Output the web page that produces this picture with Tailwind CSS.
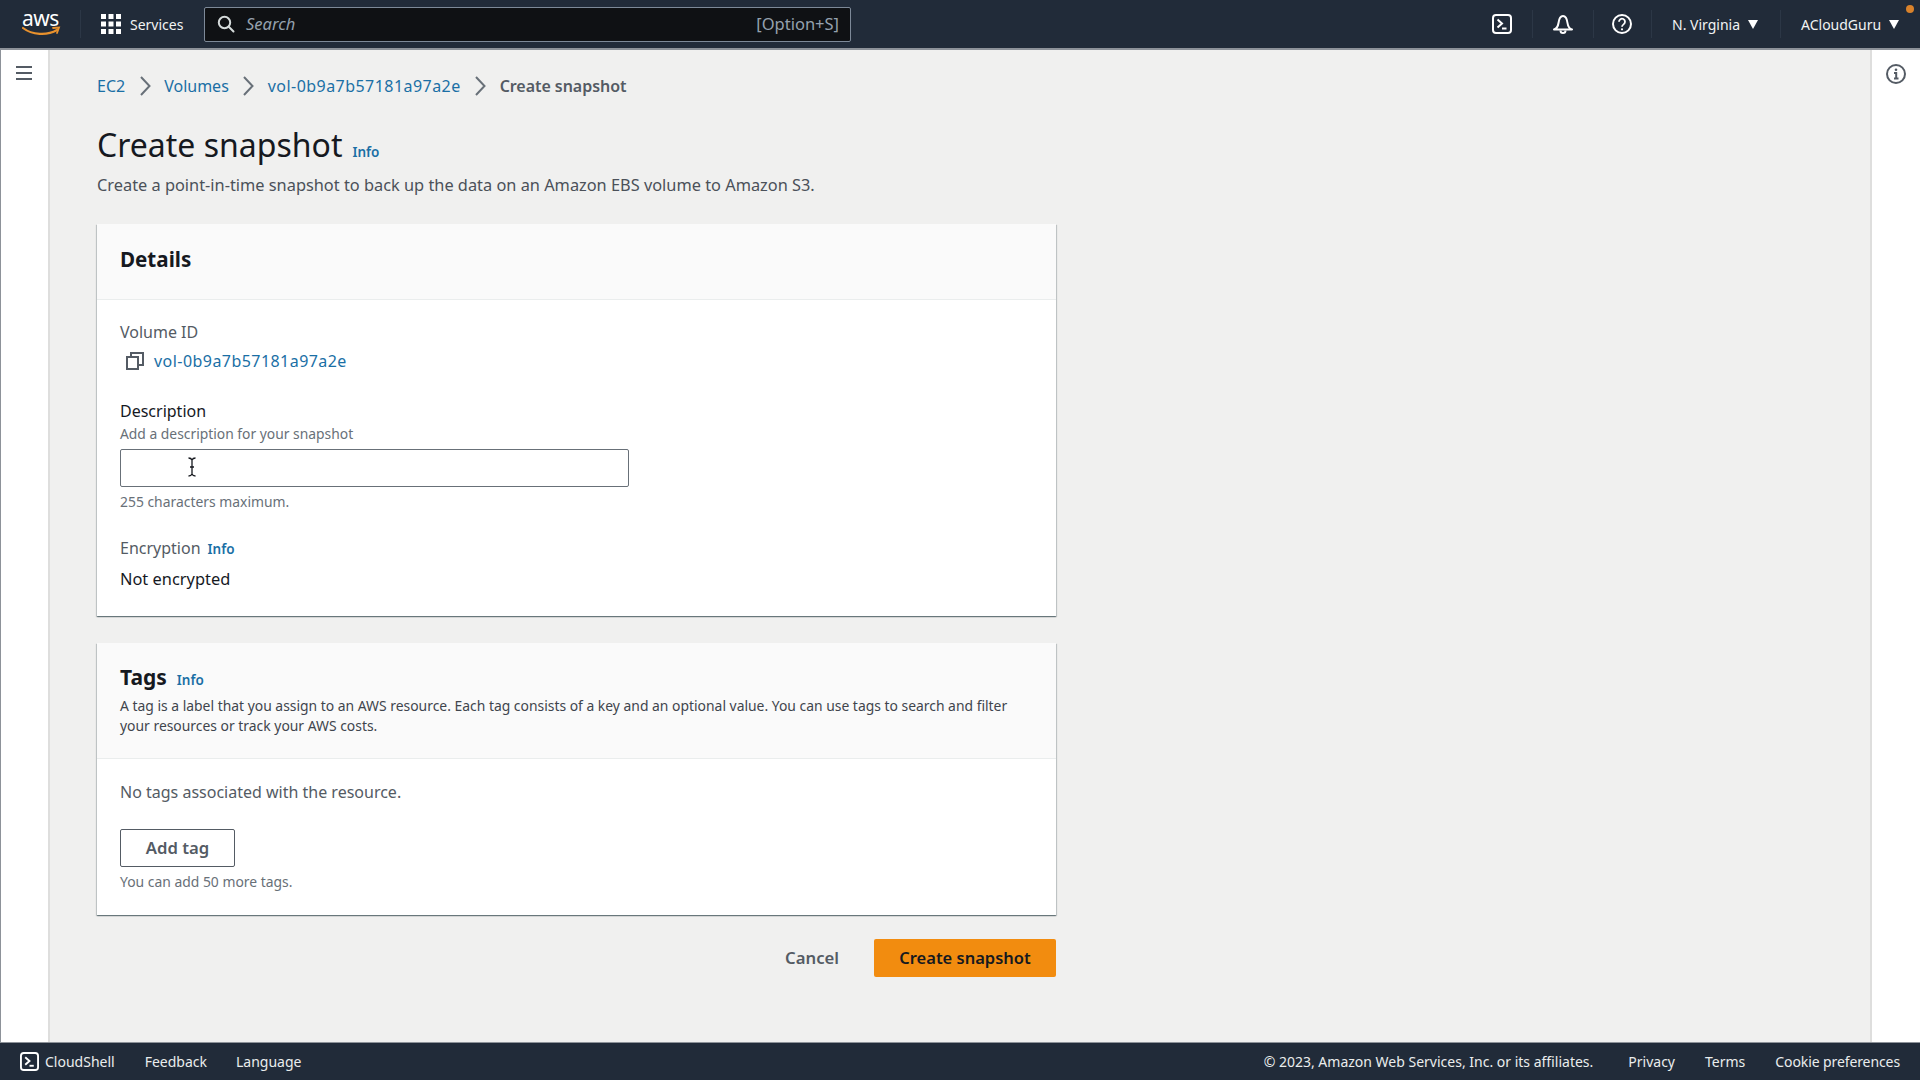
<!DOCTYPE html>
<html lang="en">

<head>
    <meta charset="UTF-8" />
    <title>Create snapshot</title>
    <script src="https://cdn.jsdelivr.net/npm/@tailwindcss/browser@4"></script>
</head>

<body class="h-screen w-screen overflow-hidden flex flex-col bg-[#f0f0ef] font-['Noto_Sans',sans-serif] text-[#16191f]">

    <!-- Top nav -->
    <header class="h-[50px] shrink-0 flex items-center bg-[#212b39] border-b-2 border-[#8d9299] text-[#f2f3f3] text-[14px] relative">
        <div class="w-[80px] h-full flex items-center pl-[22px] shrink-0">
            <div class="relative w-[40px] h-[30px]">
                <span class="absolute left-0 -top-[3px] text-[21px] leading-[24px] tracking-[-0.5px] text-white">aws</span>
                <svg class="absolute left-0 top-[17px]" width="40" height="12" viewBox="0 0 40 12" fill="none">
                    <path d="M1 2c9 7 24 8 34 2" stroke="#e8912d" stroke-width="2.2" stroke-linecap="round" />
                    <path d="M31 2l6-.5-2 5.5" stroke="#e8912d" stroke-width="1.8" fill="none" stroke-linecap="round" />
                </svg>
            </div>
        </div>
        <div class="w-px h-[28px] bg-[#2c3746]"></div>
        <div class="flex items-center ml-[20px] w-[103px] shrink-0">
            <svg width="20" height="20" viewBox="0 0 20 20" fill="#fff">
                <rect x="0" y="0" width="5" height="5" />
                <rect x="7.5" y="0" width="5" height="5" />
                <rect x="15" y="0" width="5" height="5" />
                <rect x="0" y="7.5" width="5" height="5" />
                <rect x="7.5" y="7.5" width="5" height="5" />
                <rect x="15" y="7.5" width="5" height="5" />
                <rect x="0" y="15" width="5" height="5" />
                <rect x="7.5" y="15" width="5" height="5" />
                <rect x="15" y="15" width="5" height="5" />
            </svg>
            <span class="ml-[9px]">Services</span>
        </div>
        <div class="w-[647px] h-[35px] shrink-0 flex items-center bg-[#0f1114] border border-[#7d8998] rounded-[2px] pl-[12px] pr-[11px]">
            <svg width="18" height="18" viewBox="0 0 18 18" fill="none" stroke="#d5dbdb" stroke-width="2">
                <circle cx="7.5" cy="7.5" r="5.7" />
                <path d="M11.8 11.8L16.5 16.5" stroke-linecap="round" />
            </svg>
            <span class="ml-[11px] italic text-[16.5px] text-[#95a1ae]">Search</span>
            <span class="ml-auto text-[16.5px] text-[#95a1ae]">[Option+S]</span>
        </div>

        <div class="ml-auto flex items-center h-full">
            <svg class="mr-[20px]" width="20" height="20" viewBox="0 0 20 20" fill="none" stroke="#fff" stroke-width="2">
                <rect x="1" y="1" width="18" height="18" rx="3" />
                <path d="M5.5 5.5L10 9.5L5.5 13.5" />
                <path d="M10 14.5h4.5" />
            </svg>
            <div class="w-px h-[28px] bg-[#2c3746]"></div>
            <svg class="mx-[20px]" width="20" height="20" viewBox="0 0 20 20" fill="none" stroke="#fff" stroke-width="2" stroke-linejoin="round">
                <path d="M1 15.500c3-1 4-3 4.500-6.500C6 5 7 2 10 2s4 3 4.500 7c.5 3.500 1.500 5.500 4.500 6.500z" />
                <path d="M7.500 16.500a2.500 2.500 0 0 0 5 0" />
            </svg>
            <div class="w-px h-[28px] bg-[#2c3746]"></div>
            <svg class="ml-[18px] mr-[19px]" width="20" height="20" viewBox="0 0 20 20" fill="none" stroke="#fff" stroke-width="2">
                <circle cx="10" cy="10" r="9" />
                <path d="M7 7.700a3 3 0 1 1 4.800 2.400c-1.200.9-1.800 1.400-1.800 2.700" stroke-width="1.800" />
                <circle cx="10" cy="15.300" r="1.100" fill="#fff" stroke="none" />
            </svg>
            <div class="w-px h-[28px] bg-[#2c3746]"></div>
            <div class="flex items-center w-[128px] pl-[20px]">
                <span>N. Virginia</span>
                <svg class="ml-[8px]" width="10" height="9" viewBox="0 0 10 9" fill="#fff"><path d="M0 0h10L5 9z" /></svg>
            </div>
            <div class="w-px h-[28px] bg-[#2c3746]"></div>
            <div class="flex items-center w-[139px] pl-[20px]">
                <span>ACloudGuru</span>
                <svg class="ml-[8px]" width="10" height="9" viewBox="0 0 10 9" fill="#fff"><path d="M0 0h10L5 9z" /></svg>
            </div>
        </div>
        <span class="absolute left-[1906px] top-[5px] size-[8px] rounded-full bg-[#d9822b]"></span>
    </header>

    <div class="flex-1 flex min-h-0">
        <!-- Left nav rail -->
        <aside class="w-[50px] shrink-0 bg-white border-l border-[#8d9299] border-r-2 border-r-[#dededd] flex justify-center pt-[15px]">
            <svg class="-ml-[1px]" width="18" height="16" viewBox="0 0 18 16" fill="none" stroke="#545b64" stroke-width="2">
                <path d="M1 2h16M1 8h16M1 14h16" />
            </svg>
        </aside>

        <main class="flex-1 pl-[47px] min-w-0">
            <!-- Breadcrumbs -->
            <nav class="h-[24px] mt-[24px] flex items-center text-[16px] text-[#1a6fa5]">
                <a>EC2</a>
                <svg class="mx-[13.5px]" width="12" height="20" viewBox="0 0 12 20" fill="none" stroke="#687078" stroke-width="2"><path d="M2 1l8.500 9-8.500 9" /></svg>
                <a>Volumes</a>
                <svg class="mx-[13.5px]" width="12" height="20" viewBox="0 0 12 20" fill="none" stroke="#687078" stroke-width="2"><path d="M2 1l8.500 9-8.500 9" /></svg>
                <a class="tracking-[0.45px]">vol-0b9a7b57181a97a2e</a>
                <svg class="mx-[13.5px]" width="12" height="20" viewBox="0 0 12 20" fill="none" stroke="#687078" stroke-width="2"><path d="M2 1l8.500 9-8.500 9" /></svg>
                <span class="tracking-[-0.05px] font-semibold text-[#545b64]">Create snapshot</span>
            </nav>

            <div class="flex items-baseline mt-[24px] h-[46px]">
                <h1 class="text-[32px] leading-[46px] font-normal">Create snapshot</h1>
                <a class="ml-[10px] text-[13.5px] font-semibold text-[#1a6fa5]">Info</a>
            </div>
            <p class="mt-[5px] h-[24px] text-[16.35px] leading-[24px] text-[#4b5159]">Create a point-in-time snapshot to back up the data on an Amazon EBS volume to Amazon S3.</p>

            <!-- Details -->
            <section class="w-[959px] mt-[27px] h-[392px] bg-white shadow-[0_1px_1px_0_rgba(0,28,36,.4),1px_1px_1px_0_rgba(0,28,36,.15),-1px_1px_1px_0_rgba(0,28,36,.15)]">
                <div class="h-[76px] bg-[#fafafa] border-b border-[#eaeded] px-[23px] pt-[19px]">
                    <h2 class="text-[20.6px] leading-[32px] font-bold">Details</h2>
                </div>
                <div class="px-[23px]">
                    <div class="mt-[20px] text-[16px] leading-[24px] text-[#545b64]">Volume ID</div>
                    <div class="mt-[5px] flex items-center h-[24px]">
                        <svg class="ml-[6px]" width="18" height="18" viewBox="0 0 18 18" fill="none" stroke="#545b64" stroke-width="2">
                            <rect x="1" y="5" width="11" height="12" />
                            <path d="M5 4V1h12v12h-4" />
                        </svg>
                        <a class="ml-[10px] text-[16px] tracking-[0.45px] text-[#1a6fa5]">vol-0b9a7b57181a97a2e</a>
                    </div>
                    <div class="mt-[26px] text-[16px] leading-[24px]">Description</div>
                    <div class="text-[13.85px] leading-[22px] text-[#687078]">Add a description for your snapshot</div>
                    <div class="relative mt-[4px] w-[509px] h-[38px] border border-[#687078] rounded-[2px] bg-white">
                        <svg class="absolute left-[66px] top-[7px]" width="10" height="20" viewBox="0 0 10 20" fill="none" stroke="#16191f" stroke-width="1.300">
                            <path d="M1.500 1c2 0 3 .8 3.500 2v14c-.5 1.200-1.500 2-3.500 2M8.500 1c-2 0-3 .8-3.500 2M5 17c.5 1.200 1.500 2 3.500 2M3 10h4" />
                        </svg>
                    </div>
                    <div class="mt-[4px] text-[13.9px] leading-[22px] text-[#687078]">255 characters maximum.</div>
                    <div class="mt-[23px] flex items-baseline">
                        <span class="text-[16px] leading-[24px] text-[#545b64]">Encryption</span>
                        <a class="ml-[7px] text-[13.5px] font-semibold text-[#1a6fa5]">Info</a>
                    </div>
                    <div class="mt-[7px] text-[16.4px] leading-[24px]">Not encrypted</div>
                </div>
            </section>

            <!-- Tags -->
            <section class="w-[959px] mt-[27px] h-[272px] bg-white shadow-[0_1px_1px_0_rgba(0,28,36,.4),1px_1px_1px_0_rgba(0,28,36,.15),-1px_1px_1px_0_rgba(0,28,36,.15)]">
                <div class="h-[116px] bg-[#fafafa] border-b border-[#eaeded] px-[23px] pt-[18px]">
                    <div class="flex items-baseline">
                        <h2 class="text-[21px] leading-[32px] font-bold">Tags</h2>
                        <a class="ml-[10px] text-[13.5px] font-semibold text-[#1a6fa5]">Info</a>
                    </div>
                    <p class="text-[13.9px] leading-[19.5px] text-[#3f454d] mt-[3px]">A tag is a label that you assign to an AWS resource. Each tag consists of a key and an optional value. You can use tags to search and filter your resources or track your AWS costs.</p>
                </div>
                <div class="px-[23px]">
                    <div class="mt-[21px] text-[16px] leading-[24px] text-[#545b64]">No tags associated with the resource.</div>
                    <button class="block mt-[25px] w-[115px] h-[38px] border border-[#545b64] rounded-[2px] bg-white text-[16.7px] font-semibold text-[#545b64]">Add tag</button>
                    <div class="mt-[4px] text-[13.9px] leading-[22px] text-[#687078]">You can add 50 more tags.</div>
                </div>
            </section>

            <!-- Actions -->
            <div class="w-[959px] mt-[24px] flex items-center justify-end">
                <button class="h-[38px] text-[16.7px] font-semibold text-[#545b64]">Cancel</button>
                <button class="ml-[35px] w-[182px] h-[38px] rounded-[2px] bg-[#f28c0f] text-[16.5px] font-semibold text-[#16191f]">Create snapshot</button>
            </div>
        </main>

        <!-- Right tools rail -->
        <aside class="w-[50px] shrink-0 bg-white border-l-2 border-[#dededd] flex justify-center pt-[14px]">
            <svg width="20" height="20" viewBox="0 0 20 20" fill="none" stroke="#545b64" stroke-width="2">
                <circle cx="10" cy="10" r="9" />
                <circle cx="10" cy="5.800" r="1.300" fill="#545b64" stroke="none" />
                <path d="M8 9h2.200v5.500M8 14.500h4.500" />
            </svg>
        </aside>
    </div>

    <!-- Footer -->
    <footer class="h-[38px] shrink-0 flex items-center bg-[#212b39] border-t border-[#8d9299] text-[14px] text-[#eaeded] pl-[20px] pr-[20px]">
        <svg width="19" height="19" viewBox="0 0 20 20" fill="none" stroke="#fff" stroke-width="2">
            <rect x="1" y="1" width="18" height="18" rx="3" />
            <path d="M5.500 5.500L10 9.500L5.500 13.500" />
            <path d="M10 14.500h4.500" />
        </svg>
        <span class="ml-[6px]">CloudShell</span>
        <span class="ml-[30px]">Feedback</span>
        <span class="ml-[29px]">Language</span>
        <span class="ml-auto">© 2023, Amazon Web Services, Inc. or its affiliates.</span>
        <span class="ml-[35px]">Privacy</span>
        <span class="ml-[30px]">Terms</span>
        <span class="ml-[30px] tracking-[-0.1px]">Cookie preferences</span>
    </footer>
</body>

</html>
